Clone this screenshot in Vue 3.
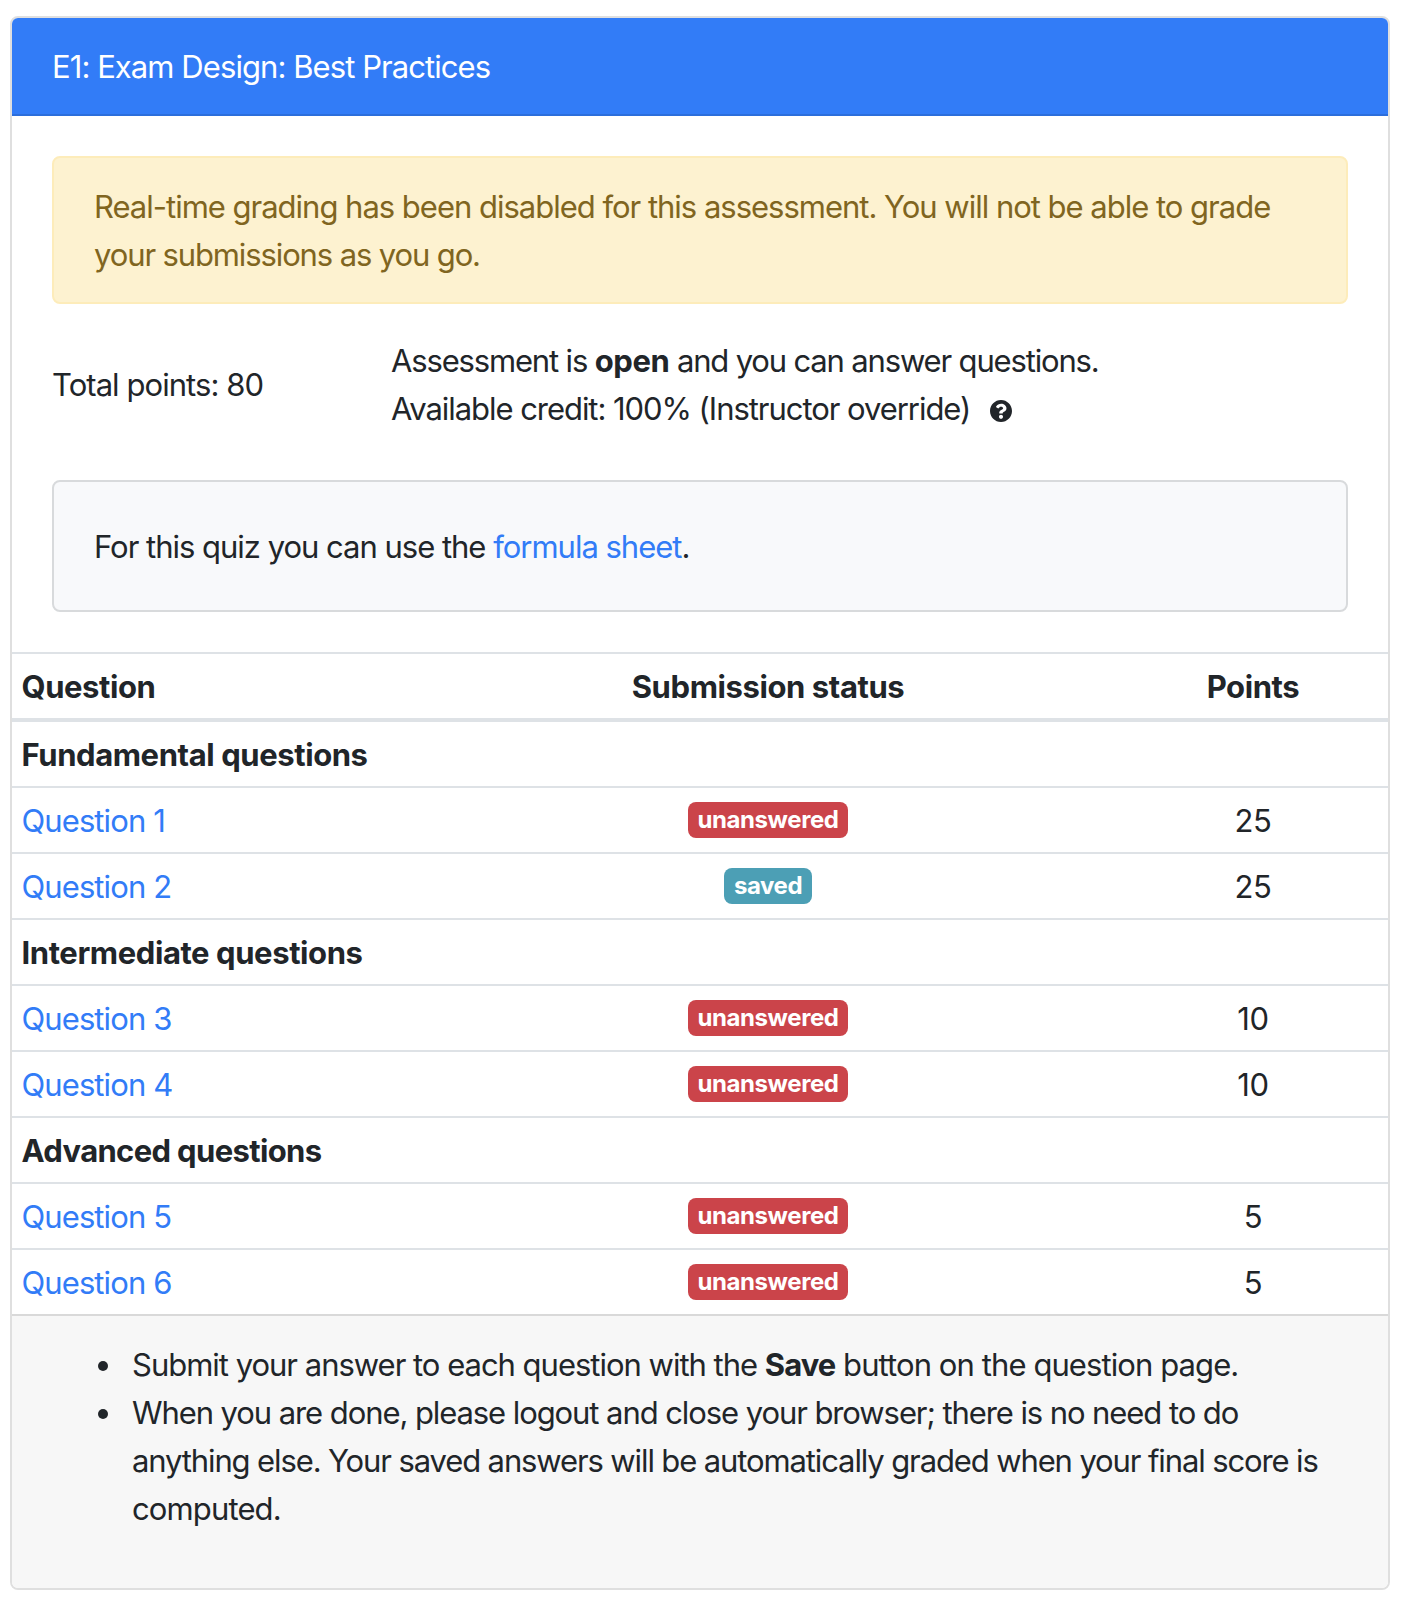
<script setup>
const zones = [
  {
    title: 'Fundamental questions',
    questions: [
      { name: 'Question 1', status: 'unanswered', points: 25 },
      { name: 'Question 2', status: 'saved', points: 25 },
    ],
  },
  {
    title: 'Intermediate questions',
    questions: [
      { name: 'Question 3', status: 'unanswered', points: 10 },
      { name: 'Question 4', status: 'unanswered', points: 10 },
    ],
  },
  {
    title: 'Advanced questions',
    tight: true,
    questions: [
      { name: 'Question 5', status: 'unanswered', points: 5 },
      { name: 'Question 6', status: 'unanswered', points: 5 },
    ],
  },
]
</script>

<template>
  <main class="card">
    <header class="card-header">E1: Exam Design: Best Practices</header>

    <section class="card-body">
      <div class="alert">
        <div>Real-time grading has been disabled for this assessment. You will not be able to grade</div>
        <div class="tight-3">your submissions as you go.</div>
      </div>

      <div class="summary">
        <div class="total">Total points: 80</div>
        <div>
          <div class="tight-4">Assessment is <strong>open</strong> and you can answer questions.</div>
          <div class="credit">
            <span>Available credit: 100% (Instructor override)</span>
            <svg class="help" viewBox="8 8 496 496" aria-label="Help">
              <path
                fill="currentColor"
                d="M504 256c0 136.997-111.043 248-248 248S8 392.997 8 256C8 119.083 119.043 8 256 8s248 111.083 248 248zM262.655 90c-54.497 0-89.255 22.957-116.549 63.758-3.536 5.286-2.353 12.415 2.715 16.258l34.699 26.31c5.205 3.947 12.621 3.008 16.665-2.122 17.864-22.658 30.113-35.797 57.303-35.797 20.429 0 45.698 13.148 45.698 32.958 0 14.976-12.363 22.667-32.534 33.976C247.128 238.528 216 254.941 216 296v4c0 6.627 5.373 12 12 12h56c6.627 0 12-5.373 12-12v-1.333c0-28.462 83.186-29.647 83.186-106.667 0-58.002-60.165-102-116.531-102zM256 338c-25.365 0-46 20.635-46 46 0 25.364 20.635 46 46 46s46-20.636 46-46c0-25.365-20.635-46-46-46z"
              />
            </svg>
          </div>
        </div>
      </div>

      <div class="note">For this quiz you can use the <a>formula sheet</a>.</div>
    </section>

    <table class="questions">
      <colgroup>
        <col class="col-question" />
        <col class="col-status" />
        <col class="col-points" />
      </colgroup>
      <thead>
        <tr>
          <th>Question</th>
          <th class="center">Submission status</th>
          <th class="center">Points</th>
        </tr>
      </thead>
      <tbody>
        <template v-for="zone in zones" :key="zone.title">
          <tr>
            <th colspan="3" :class="{ snug: zone.tight }">{{ zone.title }}</th>
          </tr>
          <tr v-for="q in zone.questions" :key="q.name">
            <td><a>{{ q.name }}</a></td>
            <td class="center">
              <span class="badge" :class="q.status">{{ q.status }}</span>
            </td>
            <td class="center points">{{ q.points }}</td>
          </tr>
        </template>
      </tbody>
    </table>

    <footer class="card-footer">
      <ul>
        <li>Submit your answer to each question with the <strong class="save">Save</strong><span class="loose"> button on the question page.</span></li>
        <li class="tight-2">
          When you are done, please logout and close your browser; there is no need to do
          <div class="tight-3">anything else. Your saved answers will be automatically graded when your final score is</div>
          <div class="last">computed.</div>
        </li>
      </ul>
    </footer>
  </main>
</template>

<style>
body {
  background: #fff;
}
</style>

<style scoped>
.card {
  box-sizing: border-box;
  width: 1380px;
  margin: 16px 0 0 10px;
  border: 2px solid #dfdfdf;
  border-radius: 8px;
  overflow: hidden;
  background: #fff;
  color: #212529;
  font: 400 31px/48px Inter, "Liberation Sans", sans-serif;
  letter-spacing: -1.01px;
  white-space: nowrap;
}
strong,
th {
  font-weight: 700;
  letter-spacing: -0.41px;
}
a {
  color: #327cf7;
}
.tight-2 {
  letter-spacing: -1.08px;
}
.tight-3 {
  letter-spacing: -1.12px;
}
.tight-4 {
  letter-spacing: -1.16px;
}
.last {
  letter-spacing: -0.87px;
}
.save {
  letter-spacing: -0.95px;
}
.loose {
  letter-spacing: -0.91px;
}
.card-header {
  padding: 25px 40px 23px;
  border-bottom: 2px solid #2c6edb;
  background: #327cf7;
  color: #fff;
  letter-spacing: -0.93px;
}
.card-body {
  padding: 40px;
}
.alert {
  padding: 25px 40px 23px;
  border: 2px solid #fdecba;
  border-radius: 8px;
  background: #fdf2d0;
  color: #806520;
}
.summary {
  display: grid;
  grid-template-columns: 339px 1fr;
  align-items: center;
  margin: 33px 0 47px;
}
.total {
  letter-spacing: -0.94px;
}
.credit {
  display: flex;
  align-items: center;
  gap: 20px;
  letter-spacing: -1.05px;
}
.help {
  width: 22px;
  height: 22px;
  margin-top: 4px;
}
.note {
  padding: 41px 40px 39px;
  border: 2px solid #d8dadc;
  border-radius: 8px;
  background: #f8f9fb;
}
.questions {
  width: 100%;
  table-layout: fixed;
  border-collapse: separate;
  border-spacing: 0;
}
.col-question {
  width: 406px;
}
.col-status {
  width: 700px;
}
.questions th,
.questions td {
  height: 48px;
  padding: 9px 10px 7px 9.5px;
  border-top: 2px solid #dee2e6;
  text-align: left;
}
.questions td {
  letter-spacing: -0.9px;
}
.questions thead th {
  border-bottom: 4px solid #dee2e6;
}
.questions tbody tr:first-child th {
  border-top: 0;
}
.questions .center {
  padding-left: 10px;
  text-align: center;
}
.questions .snug {
  letter-spacing: -0.65px;
}
.questions .points {
  letter-spacing: -0.3px;
}
.badge {
  display: inline-block;
  padding: 6px 10px;
  border-radius: 8px;
  color: #fff;
  font-size: 24px;
  font-weight: 700;
  line-height: 24px;
  letter-spacing: -0.42px;
  vertical-align: 4px;
}
.unanswered {
  background: #cb444a;
}
.saved {
  background: #4c9fb5;
}
.card-footer {
  padding: 25px 40px 23px;
  border-top: 2px solid #d9d9d9;
  background: #f7f7f7;
}
.card-footer ul {
  margin: 0 0 32px;
  padding-left: 73px;
}
.card-footer li {
  padding-left: 7px;
}
</style>
